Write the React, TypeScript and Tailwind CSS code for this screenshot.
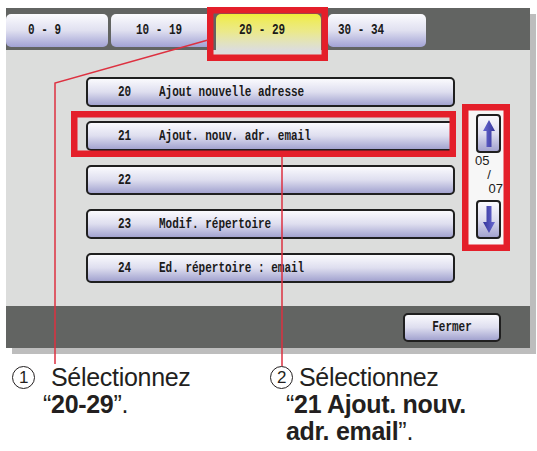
import type { ReactNode } from 'react'

const MONO = "font-['Liberation_Mono',monospace]"
const SANS = "font-['Liberation_Sans',Arial,sans-serif]"

const TABS = [
  { label: '0 - 9', cls: 'w-[102px] pl-[22px]', active: false },
  { label: '10 - 19', cls: 'ml-[3px] w-[101px] pl-[25px]', active: false },
  { label: '20 - 29', cls: 'ml-[4px] w-[105px] pl-[23px]', active: true },
  { label: '30 - 34', cls: 'ml-[7px] w-[98px] pl-[10px]', active: false },
]

const ROWS = [
  { n: '20', t: 'Ajout nouvelle adresse' },
  { n: '21', t: 'Ajout. nouv. adr. email' },
  { n: '22', t: '' },
  { n: '23', t: 'Modif. répertoire' },
  { n: '24', t: 'Ed. répertoire : email' },
]

const BTN = 'border-2 border-[#1f1f1f] bg-gradient-to-b from-[#fafafd] via-[#dedeef] to-[#a3a3cf]'

function Tall({ children, className = '' }: { children: ReactNode; className?: string }) {
  return <span className={`inline-block scale-y-[1.3] ${className}`}>{children}</span>
}

function Arrow({ down = false }: { down?: boolean }) {
  return (
    <svg width="14" height="27" viewBox="0 0 14 27" className={down ? 'rotate-180' : ''}>
      <defs>
        <linearGradient id={down ? 'ad' : 'au'} x1="0" y1="0" x2="1" y2="0">
          <stop offset="0" stopColor="#6a6ad2" />
          <stop offset="1" stopColor="#34349a" />
        </linearGradient>
      </defs>
      <polygon points="7,0 13,11 9.5,11 9.5,27 4.5,27 4.5,11 1,11" fill={`url(#${down ? 'ad' : 'au'})`} />
    </svg>
  )
}

function Num({ n }: { n: string }) {
  return (
    <span className="flex h-[23px] w-[23px] shrink-0 items-center justify-center rounded-full border-[1.5px] border-[#231f20] text-[17px] leading-none">
      {n}
    </span>
  )
}

export default function App() {
  return (
    <div className={`relative h-[451px] w-[537px] overflow-hidden bg-white ${MONO} text-[11px] font-bold text-[#1a1a1a]`}>
      <div className="ml-[6px] mt-[8px] w-[524px] shadow-[6px_6px_0_#bdbdbd]">
        {/* tab strip */}
        <div className="flex h-[42px] items-start bg-[#626462] pt-[6px]">
          {TABS.map((tab) =>
            tab.active ? (
              <div
                key={tab.label}
                className={`flex h-[36px] items-center rounded-t-[5px] bg-gradient-to-b from-[#f0ec38] via-[#ebe98c] to-[#dcdddc] pb-[3px] ${tab.cls}`}
              >
                <Tall>{tab.label}</Tall>
              </div>
            ) : (
              <div
                key={tab.label}
                className={`flex h-[33px] items-center rounded-[5px] bg-gradient-to-b from-[#fbfbfe] via-[#e0e0f0] to-[#a2a2d4] ${tab.cls}`}
              >
                <Tall>{tab.label}</Tall>
              </div>
            ),
          )}
        </div>

        {/* list */}
        <div className="flex h-[256px] items-start bg-[#dcdddc]">
          <div className="ml-[80px] mt-[27px] flex w-[369px] flex-col gap-[14px]">
            {ROWS.map((row) => (
              <div key={row.n} className={`flex h-[30px] items-center rounded-[5px] ${BTN}`}>
                <Tall className="ml-[30px] w-[41px]">{row.n}</Tall>
                <Tall>{row.t}</Tall>
              </div>
            ))}
          </div>
          <div className="ml-[11px] mt-[58px] flex h-[141px] w-[40px] flex-col bg-[#f7f7f7] pl-[9px] pt-[6px]">
            <div className={`ml-px flex h-[39px] w-[25px] items-center justify-center rounded-[4px] ${BTN}`}>
              <Arrow />
            </div>
            <div className={`flex h-[47px] w-[28px] flex-col pt-[1px] ${SANS} text-[13px] font-normal leading-[14px]`}>
              <span className="self-start">05</span>
              <span className="self-center">/</span>
              <span className="self-end">07</span>
            </div>
            <div className={`ml-px flex h-[39px] w-[25px] items-center justify-center rounded-[4px] ${BTN}`}>
              <Arrow down />
            </div>
          </div>
        </div>

        {/* footer */}
        <div className="flex h-[42px] justify-end bg-[#626462] pr-[29px] pt-[7px]">
          <div className={`flex h-[29px] w-[98px] items-center justify-center rounded-[5px] ${BTN}`}>
            <Tall>Fermer</Tall>
          </div>
        </div>
      </div>

      {/* captions */}
      <div className={`mt-[16px] flex text-[25px] font-normal leading-[27px] tracking-[-0.3px] text-[#231f20] ${SANS}`}>
        <div className="ml-[12px] w-[258px]">
          <div className="flex items-center">
            <Num n="1" />
            <span className="ml-[16px]">Sélectionnez</span>
          </div>
          <div className="pl-[31px]">
            “<b>20-29</b>”.
          </div>
        </div>
        <div>
          <div className="flex items-center">
            <Num n="2" />
            <span className="ml-[6px]">Sélectionnez</span>
          </div>
          <div className="pl-[16px]">
            “<b>21 Ajout. nouv.</b>
          </div>
          <div className="pl-[16px]">
            <b>adr. email</b>”.
          </div>
        </div>
      </div>

      {/* annotation overlay */}
      <svg className="pointer-events-none absolute left-0 top-0" width="537" height="451">
        <g fill="none" stroke="#e41f2a" strokeWidth="6.5">
          <rect x="210.25" y="10.25" width="114.5" height="47.5" />
          <rect x="74.25" y="114.25" width="378.5" height="39.5" />
          <rect x="465.25" y="107.25" width="41.5" height="140.5" />
        </g>
        <g fill="none" stroke="#dd3140" strokeWidth="1.5">
          <polyline points="208,40 55,83 55,364" />
          <line x1="282" y1="157" x2="282" y2="366" />
        </g>
      </svg>
    </div>
  )
}
